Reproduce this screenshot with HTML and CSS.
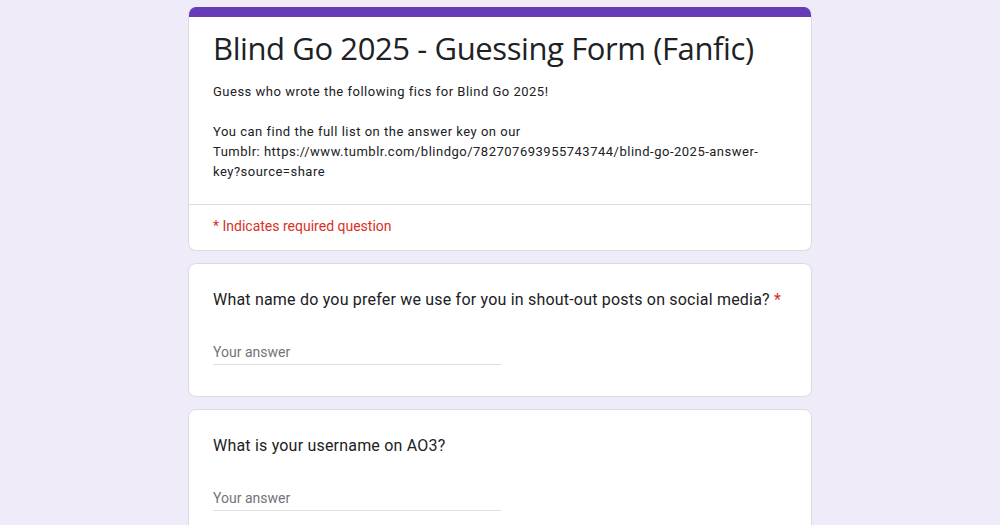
FILE: index.html
```html
<!DOCTYPE html>
<html>
<head>
<meta charset="utf-8">
<link rel="stylesheet" href="styles.css">
</head>
<body>
<div class="page">
  <div class="card header-card">
    <div class="accent"></div>
    <div class="header-main">
      <h1 class="title">Blind Go 2025 - Guessing Form (Fanfic)</h1>
      <div class="desc">
        <p>Guess who wrote the following fics for Blind Go 2025!</p>
        <p class="blank">&nbsp;</p>
        <p>You can find the full list on the answer key on our<br>Tumblr: https://www.tumblr.com/blindgo/782707693955743744/blind-go-2025-answer-<br>key?source=share</p>
      </div>
    </div>
    <div class="required-note">* Indicates required question</div>
  </div>

  <div class="card question">
    <div class="q-title">What name do you prefer we use for you in shout-out posts on social media? <span class="star">*</span></div>
    <div class="answer">Your answer</div>
  </div>

  <div class="card question">
    <div class="q-title">What is your username on AO3?</div>
    <div class="answer">Your answer</div>
  </div>
</div>
</body>
</html>
```
FILE: styles.css
```css
html, body {
  margin: 0;
  padding: 0;
  background: #f0ebf8;
}
body {
  font-family: Roboto, "Liberation Sans", Arial, sans-serif;
  color: #202124;
}
.page {
  width: 624px;
  margin: 0 auto;
  padding-top: 7px;
  display: flex;
  flex-direction: column;
  gap: 12px;
}
.card {
  background: #fff;
  border: 1px solid #dadce0;
  border-radius: 8px;
  overflow: hidden;
}
.header-card {
  border-top: none;
}
.accent {
  height: 10px;
  background: #673ab7;
}
.header-main {
  padding: 9px 24px 22px;
  border-bottom: 1px solid #dadce0;
}
.title {
  margin: 0;
  font-family: "Open Sans", Roboto, sans-serif;
  font-weight: 400;
  font-size: 31px;
  line-height: 44px;
  letter-spacing: -0.4px;
  color: #202124;
}
.desc {
  margin-top: 12px;
  font-size: 13px;
  line-height: 20px;
  letter-spacing: 0.5px;
}
.desc p {
  margin: 0;
}
.required-note {
  padding: 11px 24px 14px;
  font-size: 14px;
  line-height: 20px;
  color: #d93025;
}
.question {
  padding: 24px 24px 31px;
}
.q-title {
  font-size: 16px;
  line-height: 24px;
  letter-spacing: 0.2px;
  white-space: nowrap;
}
.star {
  color: #d93025;
}
.answer {
  margin-top: 30px;
  width: 288px;
  font-size: 14px;
  line-height: 20px;
  color: #70757a;
  padding-bottom: 2px;
  border-bottom: 1px solid #e0e0e0;
}
```
